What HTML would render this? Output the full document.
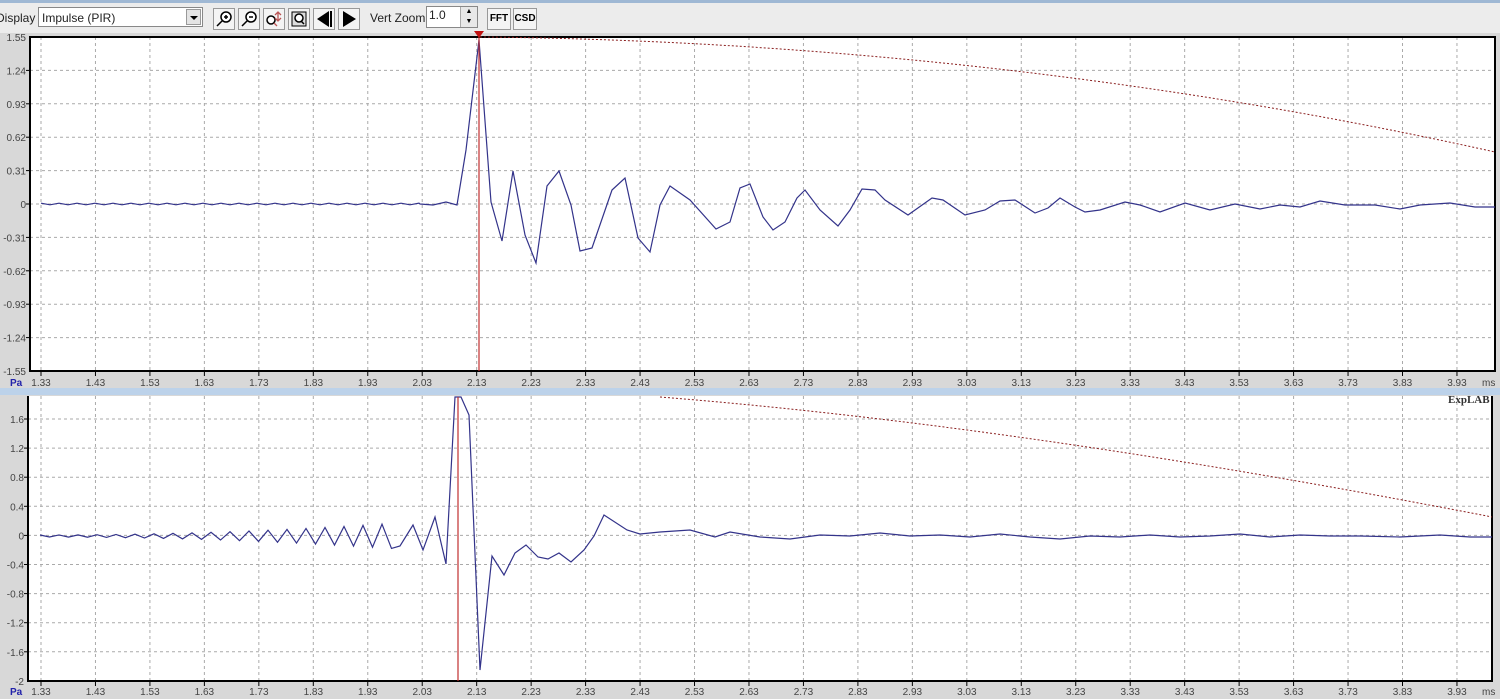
<!DOCTYPE html>
<html><head><meta charset="utf-8"><style>
body{margin:0;width:1500px;height:699px;overflow:hidden;background:#d8d8d8;font-family:"Liberation Sans",sans-serif;position:relative}
.tb{position:absolute;left:0;top:0;width:1500px;height:33px;background:#ececec;border-top:3px solid #9fb8d4;box-sizing:border-box}
.t{position:absolute;font-size:12px;color:#222}
.btn{position:absolute;top:5px;width:22px;height:22px;border:1px solid #999;background:#f4f4f4;box-sizing:border-box}
</style></head><body>
<div class="tb">
<div class="t" style="left:-4px;top:8px">Display</div>
<div style="position:absolute;left:38px;top:4px;width:165px;height:20px;border:1px solid #888;background:#fff;box-sizing:border-box"><span class="t" style="left:3px;top:3px">Impulse (PIR)</span><div style="position:absolute;right:1px;top:1px;width:15px;height:16px;background:#e4e4e4;border:1px solid #999;box-sizing:border-box"><div style="position:absolute;left:3px;top:6px;border-left:4px solid transparent;border-right:4px solid transparent;border-top:4px solid #000"></div></div></div>
<div class="btn" style="left:213px"><svg width="20" height="20"><circle cx="12" cy="8" r="5" fill="#fff" stroke="#000" stroke-width="1.5"/><path d="M8 12L3 17M10 8h4M12 6v4" stroke="#000" stroke-width="1.5"/></svg></div>
<div class="btn" style="left:238px"><svg width="20" height="20"><circle cx="12" cy="8" r="5" fill="#fff" stroke="#000" stroke-width="1.5"/><path d="M8 12L3 17M10 8h4" stroke="#000" stroke-width="1.5"/></svg></div>
<div class="btn" style="left:263px"><svg width="20" height="20"><circle cx="7" cy="11" r="4" fill="#fff" stroke="#000" stroke-width="1.5"/><path d="M10 14l3 3M14 3v9M11 6l3-3 3 3M11 9l3 3 3-3" stroke="#b55" stroke-width="1.3" fill="none"/></svg></div>
<div class="btn" style="left:288px"><svg width="20" height="20"><rect x="3" y="3" width="14" height="14" fill="#ddd" stroke="#000"/><circle cx="10" cy="9" r="4" fill="#fff" stroke="#000" stroke-width="1.5"/><path d="M12 12l3 3" stroke="#000" stroke-width="1.5"/></svg></div>
<div class="btn" style="left:313px"><svg width="20" height="20"><path d="M15 2v16L3 10z" fill="#000"/><path d="M17 2v16" stroke="#000" stroke-width="2"/></svg></div>
<div class="btn" style="left:338px"><svg width="20" height="20"><path d="M4 2v16L17 10z" fill="#000"/></svg></div>
<div class="t" style="left:370px;top:8px">Vert Zoom</div>
<div style="position:absolute;left:426px;top:3px;width:52px;height:22px;border:1px solid #888;background:#fff;box-sizing:border-box"><span class="t" style="left:2px;top:1px">1.0</span><div style="position:absolute;right:0;top:0;width:16px;height:20px;background:#e8e8e8;border-left:1px solid #aaa;font-size:7px;text-align:center;line-height:10px">▲<br>▼</div></div>
<div class="btn" style="left:487px;width:24px;font-size:10px;font-weight:bold;text-align:center;line-height:20px">FFT</div>
<div class="btn" style="left:513px;width:24px;font-size:10px;font-weight:bold;text-align:center;line-height:20px">CSD</div>
</div>
<div style="position:absolute;left:0;top:388px;width:1500px;height:7px;background:#bcd2ea"></div>
<svg id="s" width="1500" height="699" style="position:absolute;left:0;top:0" font-family="Liberation Sans" font-size="10"></svg>
<script>
const s=document.getElementById('s');let h='';
function grid(x0,y0,x1,y1,ys,labs,xy){
 h+=`<rect x="${x0}" y="${y0}" width="${x1-x0}" height="${y1-y0}" fill="#fff"/>`;
 for(let i=0;i<27;i++){let x=41+i*54.46;h+=`<line x1="${x}" y1="${y0}" x2="${x}" y2="${y1}" stroke="#aaa" stroke-dasharray="3,3"/><line x1="${x}" y1="${y1}" x2="${x}" y2="${y1+5}" stroke="#000"/><text x="${x}" y="${xy}" text-anchor="middle" fill="#444">${(1.33+i*0.1).toFixed(2)}</text>`;}
 ys.forEach((y,i)=>{h+=`<line x1="${x0}" y1="${y}" x2="${x1}" y2="${y}" stroke="#aaa" stroke-dasharray="3,3"/><line x1="${x0-4}" y1="${y}" x2="${x0}" y2="${y}" stroke="#000"/><text x="${x0-4}" y="${y+4}" text-anchor="end" fill="#444">${labs[i]}</text>`;});
 h+=`<text x="10" y="${xy}" fill="#22a" font-weight="bold">Pa</text><text x="1482" y="${xy}" fill="#444">ms</text>`;
}
let ty=[],tl=['1.55','1.24','0.93','0.62','0.31','0','-0.31','-0.62','-0.93','-1.24','-1.55'];
for(let i=0;i<11;i++)ty.push(37+i*33.4);
grid(30,37,1495,371,ty.slice(1,10),tl.slice(1,10),386);
h+=`<text x="26" y="41" text-anchor="end" fill="#444">1.55</text><text x="26" y="375" text-anchor="end" fill="#444">-1.55</text>`;
h+=`<path d="M30 37H1495V371H30Z" fill="none" stroke="#000" stroke-width="2"/>`;
let by=[],bl=['1.6','1.2','0.8','0.4','0','-0.4','-0.8','-1.2','-1.6'];
for(let i=0;i<9;i++)by.push(419+i*29.1);
grid(28,396,1492,681,by,bl,695);
h+=`<text x="24" y="685" text-anchor="end" fill="#444">-2</text>`;
h+=`<path d="M28 396V681H1492V396" fill="none" stroke="#000" stroke-width="2"/>`;
let p=[];for(let x=41;x<420;x+=9)p.push([x,204+((x/9|0)%2?1:-1)*0.8]);
p=p.concat([[420,204],[433,205],[446,202],[457,205],[466,150],[479,40],[491,202],[502,241],[513,171],[525,235],[536,263],[547,186],[559,171],[571,205],[580,251],[592,248],[612,190],[625,178],[638,238],[650,252],[660,205],[670,186],[690,200],[716,229],[730,222],[740,188],[750,184],[763,217],[773,230],[785,222],[797,198],[805,190],[820,210],[838,226],[850,210],[862,189],[875,190],[885,200],[908,215],[932,198],[943,200],[965,215],[985,210],[1000,201],[1015,200],[1035,213],[1048,208],[1060,198],[1075,207],[1085,212],[1100,210],[1125,202],[1140,205],[1160,212],[1185,203],[1210,210],[1235,204],[1260,209],[1280,205],[1300,207],[1320,201],[1345,205],[1375,205],[1400,209],[1420,205],[1450,203],[1475,207],[1495,207]]);
h+=`<polyline points="${p.join(' ')}" fill="none" stroke="#33338a" stroke-width="1.2"/>`;
h+=`<path d="M480 37C800 40 1150 75 1495 152" fill="none" stroke="#8b2020" stroke-dasharray="2,2"/>`;
h+=`<line x1="479" y1="37" x2="479" y2="371" stroke="#c03030" stroke-width="1.2"/><path d="M474 31H484L479 38Z" fill="#c01010"/>`;
let q=[];let k=0;for(let x=40;x<400;x+=9.5){let a=1+Math.pow((x-40)/360,2)*12;q.push([x,536+(k%2?a:-a)]);k++;}
q=q.concat([[400,546],[413,525],[423,550],[435,517],[446,564],[455,397],[461,397],[469,415],[480,670],[492,556],[504,575],[515,553],[526,545],[538,557],[548,559],[559,553],[571,562],[584,550],[594,536],[604,515],[627,530],[640,534],[660,532],[690,530],[715,537],[730,532],[760,537],[790,539],[820,535],[850,536],[880,533],[910,536],[940,535],[970,537],[1000,534],[1030,537],[1060,539],[1090,536],[1120,537],[1150,535],[1180,537],[1210,536],[1240,534],[1270,537],[1300,535],[1330,536],[1360,536],[1400,537],[1440,535],[1470,537],[1492,537]]);
h+=`<polyline points="${q.join(' ')}" fill="none" stroke="#33338a" stroke-width="1.2"/>`;
h+=`<path d="M660 397C950 420 1250 470 1492 517" fill="none" stroke="#8b2020" stroke-dasharray="2,2"/>`;
h+=`<line x1="458" y1="397" x2="458" y2="681" stroke="#c03030" stroke-width="1.2"/>`;
h+=`<text x="1448" y="403" font-family="Liberation Serif" font-weight="bold" font-size="11" fill="#333">ExpLAB</text>`;
s.innerHTML=h;
</script>
</body></html>
